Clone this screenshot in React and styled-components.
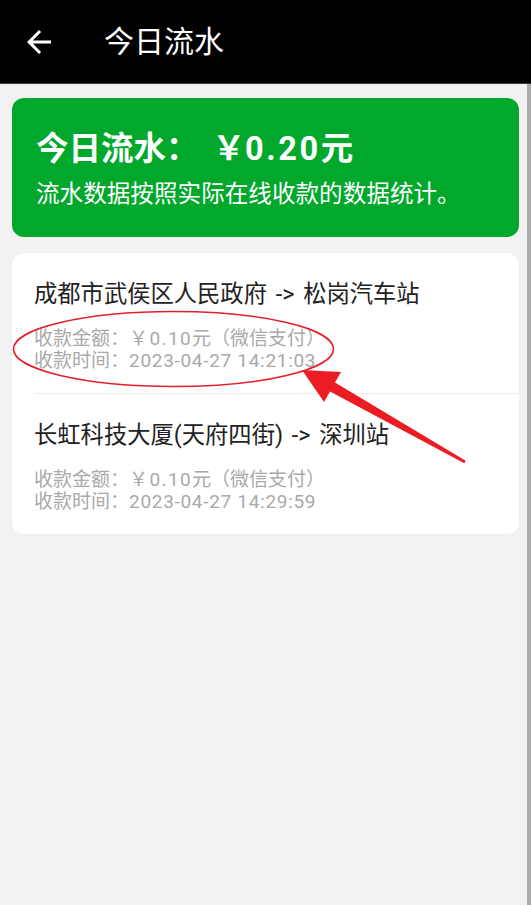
import React from "react";
import styled, { createGlobalStyle } from "styled-components";

const Global = createGlobalStyle`
  html, body { margin: 0; padding: 0; }
  body {
    background: #f2f2f2;
    font-family: Roboto, "Noto Sans CJK SC", sans-serif;
  }
  * { box-sizing: border-box; }
`;

const Page = styled.div`
  position: relative;
  width: 531px;
  min-height: 905px;
  display: flex;
  flex-direction: column;
  background: #f2f2f2;
`;

const Header = styled.header`
  height: 84px;
  background: #000;
  display: flex;
  align-items: center;
  padding-left: 21px;
  border-bottom: 1px solid #3a3a3a;
  flex-shrink: 0;
`;

const BackIcon = styled.svg`
  width: 36px;
  height: 36px;
  flex-shrink: 0;
`;

const HeaderTitle = styled.h1`
  margin: 0 0 0 47px;
  color: #fff;
  font-size: 30px;
  font-weight: 400;
  line-height: 36px;
`;

const Body = styled.div`
  flex: 1;
  display: flex;
`;

const Content = styled.main`
  flex: 1;
  padding: 14px 8px 0 12px;
  display: flex;
  flex-direction: column;
  gap: 16px;
`;

const Scrollbar = styled.div`
  width: 4px;
  background: #ababab;
`;

const SummaryCard = styled.section`
  background: #02a82c;
  border-radius: 12px;
  padding: 30px 22px 28px 24px;
  color: #fff;
`;

const SummaryTitle = styled.div`
  font-size: 32.5px;
  font-weight: 700;
  line-height: 42px;
  white-space: nowrap;
`;

const Money = styled.span`
  margin-left: 14px;
`;

const Digits = styled.span`
  letter-spacing: 2.6px;
`;

const SummaryNote = styled.div`
  margin-top: 9px;
  font-size: 23.6px;
  line-height: 30px;
`;

const ListCard = styled.section`
  background: #fff;
  border-radius: 12px;
  box-shadow: 0 0 2px rgba(0, 0, 0, 0.04);
  overflow: hidden;
`;

const Item = styled.div`
  margin-left: 22px;
  padding: 26px 0 21px 0;
  border-top: ${(p) => (p.$first ? "none" : "1px solid #ececec")};
`;

const ItemTitle = styled.div`
  font-size: 23.3px;
  line-height: 30px;
  color: #222;
`;

const RouteSep = styled.span`
  margin: 0 3px;
`;

const Meta = styled.div`
  margin-top: 19px;
  display: flex;
  flex-direction: column;
`;

const MetaLine = styled.div`
  font-size: 19px;
  line-height: 22px;
  color: #a9a9a9;
`;

const MetaValue = styled.span`
  letter-spacing: ${(p) => p.$spacing || "0.7px"};
`;

const Overlay = styled.svg`
  position: absolute;
  left: 0;
  top: 0;
  width: 531px;
  height: 905px;
  pointer-events: none;
`;

const records = [
  {
    from: "成都市武侯区人民政府",
    to: "松岗汽车站",
    amount: "0.10",
    method: "微信支付",
    time: "2023-04-27 14:21:03",
  },
  {
    from: "长虹科技大厦(天府四街)",
    to: "深圳站",
    amount: "0.10",
    method: "微信支付",
    time: "2023-04-27 14:29:59",
  },
];

export default function App() {
  return (
    <>
      <Global />
      <Page>
        <Header>
          <BackIcon viewBox="0 0 24 24">
            <path
              fill="#fff"
              d="M20 11H7.83l5.59-5.59L12 4l-8 8 8 8 1.41-1.41L7.83 13H20v-2z"
            />
          </BackIcon>
          <HeaderTitle>今日流水</HeaderTitle>
        </Header>
        <Body>
          <Content>
            <SummaryCard>
              <SummaryTitle>
                今日流水：
                <Money>
                  ￥<Digits>0.20</Digits>元
                </Money>
              </SummaryTitle>
              <SummaryNote>流水数据按照实际在线收款的数据统计。</SummaryNote>
            </SummaryCard>
            <ListCard>
              {records.map((r, i) => (
                <Item key={i} $first={i === 0}>
                  <ItemTitle>
                    {r.from}
                    <RouteSep> -&gt; </RouteSep>
                    {r.to}
                  </ItemTitle>
                  <Meta>
                    <MetaLine>
                      收款金额：
                      <MetaValue $spacing="1.4px">￥{r.amount}</MetaValue>元（
                      {r.method}）
                    </MetaLine>
                    <MetaLine>
                      收款时间：<MetaValue>{r.time}</MetaValue>
                    </MetaLine>
                  </Meta>
                </Item>
              ))}
            </ListCard>
          </Content>
          <Scrollbar />
        </Body>
        <Overlay viewBox="0 0 531 905">
          <ellipse
            cx="173.5"
            cy="349"
            rx="160"
            ry="37.5"
            fill="none"
            stroke="#e5202a"
            strokeWidth="1.6"
          />
          <polygon
            fill="#ec1c24"
            points="302,370 341,372 335,382.6 465.7,460.7 464.3,463.3 330,391.4 324,402"
          />
        </Overlay>
      </Page>
    </>
  );
}
